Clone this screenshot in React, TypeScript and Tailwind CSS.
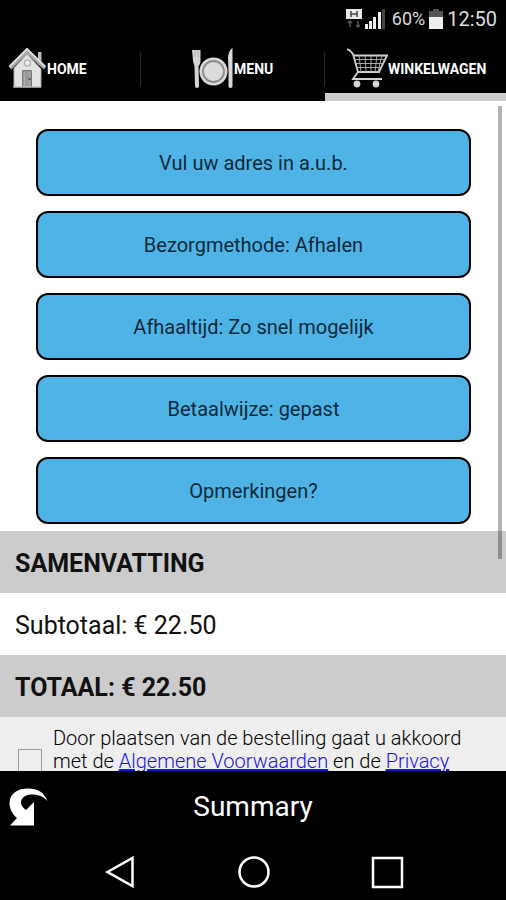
import React from "react";

function HouseIcon() {
  return (
    <svg viewBox="0 0 38 42" className="h-[42px] w-[38px] shrink-0" aria-hidden="true">
      <path d="M30 4h3.500v13H30z" fill="#bbb" />
      <path d="M6 20 19 6l14 15v18H6z" fill="#e4e4e4" stroke="#aaa" />
      <path d="M2 20 19 3l18 17" fill="none" stroke="#a5a5a5" strokeWidth="4" />
      <path d="M1.500 18.500 19 1l18 17.500" fill="none" stroke="#ddd" strokeWidth="2" />
      <circle cx="19.500" cy="15" r="3" fill="#eee" stroke="#b5b5b5" strokeWidth="1.500" />
      <path d="M14.500 39V22.500h9V39" fill="#9a9a9a" stroke="#777" />
      <path d="M16.500 24v14m5-14v14" stroke="#aaa" />
      <circle cx="21.500" cy="31" r="1" fill="#444" />
      <path d="M5 39h28" stroke="#ccc" />
    </svg>
  );
}

function PlateIcon() {
  return (
    <svg viewBox="0 0 42 42" className="h-[42px] w-[42px] shrink-0" aria-hidden="true">
      <path d="M0 2h8.500v11q0 3-2 5l.5 20q0 2-2 2t-2-2L2.500 18q-1-2-1.500-5z" fill="#d5d5d5" />
      <path d="M3 2v7m3-7v7" stroke="#999" strokeWidth=".6" />
      <circle cx="21.500" cy="23.500" r="14" fill="#d8d8d8" />
      <circle cx="21.500" cy="23.500" r="10.500" fill="#dcdcdc" stroke="#8a8a8a" strokeWidth="1.800" />
      <path d="M40.500 0v38q0 2-2 2t-2-2V24l-.5-15q1-7 4.500-9z" fill="#d8d8d8" />
    </svg>
  );
}

function CartIcon() {
  return (
    <svg viewBox="0 0 42 42" className="h-[42px] w-[42px] shrink-0" fill="none" stroke="#d2d2d2" strokeWidth="1.800" aria-hidden="true">
      <path d="M1 1q3 1 6 5l5 18-5 7h29" />
      <path d="M8 7.500h33L33 24H12" />
      <path d="M9 11.500h30M10 15.500h26M11 19.500h24M13 7l2 17M19 7l1 17M25 7v17M31 7l-2 17M36 7l-4 17" stroke="#aaa" strokeWidth="1" />
      <circle cx="11" cy="36" r="2.500" fill="#ddd" />
      <circle cx="30" cy="36" r="2.500" fill="#ddd" />
    </svg>
  );
}

function StatusBar() {
  return (
    <div className="flex h-[37px] items-center justify-end pr-[9px] text-lg text-[#ddd]">
      <svg viewBox="0 0 42 22" className="mr-[5px] h-[22px] w-[42px]" aria-label="Signaal" role="img">
        <path d="M1 1h16v10H1z" fill="#e8e8e8" />
        <path d="M6 3v6m6-6v6M6 6h6" stroke="#444" strokeWidth="1.500" />
        <path d="M5 19v-6m-2 2 2-2 2 2M13 13v6m-2-2 2 2 2-2" fill="none" stroke="#555" strokeWidth="1.500" />
        <path d="M20 16h3v5h-3zM24 13h3v8h-3zM28 9h3v12h-3zM33 4h3v17h-3z" fill="#eee" />
        <path d="M37 1h3v20h-3z" fill="#444" />
      </svg>
      <span>60%</span>
      <svg viewBox="0 0 14 20" className="mx-1 h-5 w-[14px]" aria-hidden="true">
        <path d="M4 0h6v2h4v7H0V2h4z" fill="#555" />
        <path d="M0 8h14v12H0z" fill="#eee" />
      </svg>
      <time className="text-xl">12:50</time>
    </div>
  );
}

const options = [
  "Vul uw adres in a.u.b.",
  "Bezorgmethode: Afhalen",
  "Afhaaltijd: Zo snel mogelijk",
  "Betaalwijze: gepast",
  "Opmerkingen?",
];

export default function App() {
  return (
    <div className="flex h-screen flex-col bg-black font-['Roboto',sans-serif] text-[#111]">
      <header className="shrink-0">
        <StatusBar />
        <nav className="grid h-16 grid-cols-[141fr_184fr_181fr] text-sm font-bold text-white">
          <button className="flex items-center pl-2">
            <HouseIcon />
            <span className="pl-px">HOME</span>
            <span className="ml-auto h-[34px] w-px bg-[#2c2c2c]" />
          </button>
          <button className="flex items-center pl-[51px]">
            <PlateIcon />
            <span>MENU</span>
            <span className="ml-auto h-[34px] w-px bg-[#2c2c2c]" />
          </button>
          <button className="relative flex items-center pl-[21px]" aria-current="page">
            <CartIcon />
            <span>WINKELWAGEN</span>
            <span className="absolute inset-x-0 bottom-0 h-2 bg-[#ccc]" />
          </button>
        </nav>
      </header>

      <main className="relative min-h-0 flex-1 overflow-hidden bg-white">
        <div className="flex flex-col gap-[15px] pt-7 pr-[35px] pb-[7px] pl-9">
          {options.map((label) => (
            <button key={label} className="h-[67px] w-full rounded-xl border-2 border-black bg-[#50b3e6] text-xl text-[#0b2a3a]">
              {label}
            </button>
          ))}
        </div>
        <h2 className="flex h-[62px] items-center bg-[#ccc] px-[15px] pt-1 text-[25px] font-bold">SAMENVATTING</h2>
        <p className="flex h-[62px] items-center px-[15px] pt-1 text-[25px]">Subtotaal: € 22.50</p>
        <p className="flex h-[62px] items-center bg-[#ccc] px-[15px] pt-1 text-[25px] font-bold">TOTAAL: € 22.50</p>
        <div className="flex gap-[11px] bg-[#eee] px-[18px] pt-[10px] pb-4">
          <input id="terms" type="checkbox" className="mt-[22px] size-6 shrink-0 appearance-none border border-[#999] bg-[#eee]" />
          <label htmlFor="terms" className="text-xl leading-[23px] font-light text-black">
            Door plaatsen van de bestelling gaat u akkoord met de{" "}
            <a href="#voorwaarden" className="text-[#1a14e0] underline underline-offset-1">Algemene Voorwaarden</a> en de{" "}
            <a href="#privacy" className="text-[#1a14e0] underline underline-offset-1">Privacy</a>
          </label>
        </div>
        <div className="absolute top-[5px] right-1 h-[453px] w-1 bg-black/30" />
      </main>

      <footer className="shrink-0 text-white">
        <div className="grid h-[72px] grid-cols-[48px_1fr_48px] items-center">
          <button className="pl-2" aria-label="Terug">
            <svg viewBox="0 0 40 40" className="size-10" fill="white" aria-hidden="true">
              <path d="M2 38.500 9 31C4 27 1.500 21 1.500 16 2 6 10 1.500 20 1.500c10 0 16 4 19.500 12.500C35 9 29 7 23 7.500c-6 0-10 4-10 8 0 3 2 5 5 7.500L26 15v23.500z" />
            </svg>
          </button>
          <h1 className="text-center text-[28px] leading-9">Summary</h1>
        </div>
        <nav className="flex h-[57px] items-center justify-between pr-[101px] pl-[102px]">
          <button aria-label="Vorige">
            <svg viewBox="0 0 36 36" className="size-9" fill="none" stroke="white" strokeWidth="2.500" aria-hidden="true">
              <path d="M5.500 18 30.500 4v28z" />
            </svg>
          </button>
          <button aria-label="Startscherm">
            <svg viewBox="0 0 36 36" className="size-9" fill="none" stroke="white" strokeWidth="2.500" aria-hidden="true">
              <circle cx="18" cy="18" r="14.500" />
            </svg>
          </button>
          <button aria-label="Overzicht">
            <svg viewBox="0 0 36 36" className="size-9" fill="none" stroke="white" strokeWidth="2.500" aria-hidden="true">
              <path d="M4 4h29v29H4z" />
            </svg>
          </button>
        </nav>
      </footer>
    </div>
  );
}
